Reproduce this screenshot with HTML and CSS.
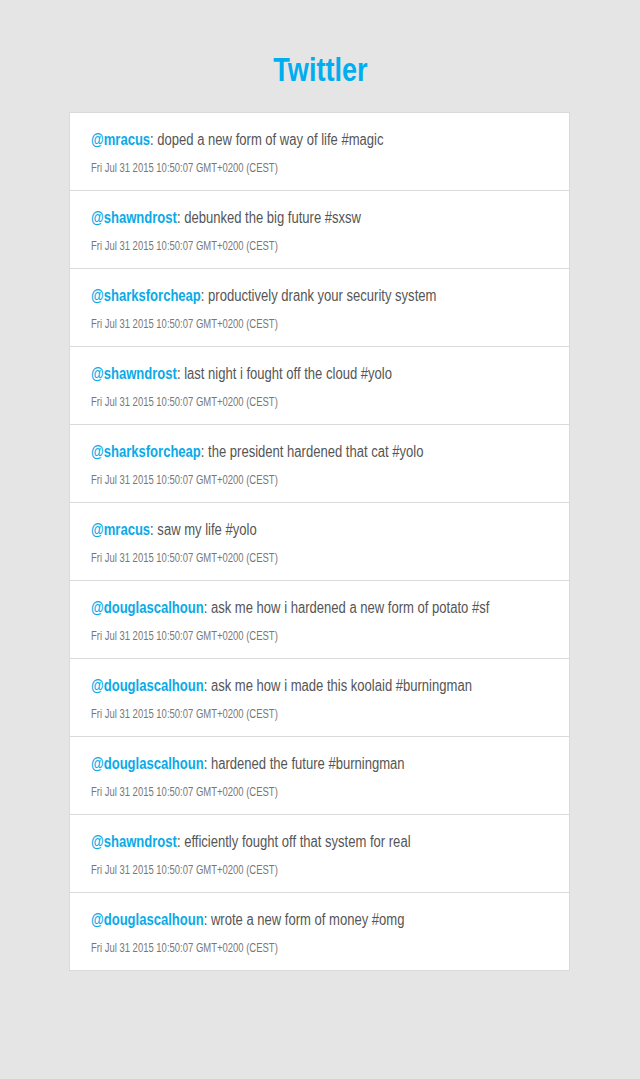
FILE: index.html
```html
<!DOCTYPE html>
<html>
<head>
<meta charset="utf-8">
<link rel="stylesheet" href="styles.css">
</head>
<body>
<h1 class="title"><span class="narrow">Twittler</span></h1>
<ul class="feed">
  <li class="tweet"><p class="msg"><span class="user">@mracus</span>: doped a new form of way of life #magic</p><p class="date">Fri Jul 31 2015 10:50:07 GMT+0200 (CEST)</p></li>
  <li class="tweet"><p class="msg"><span class="user">@shawndrost</span>: debunked the big future #sxsw</p><p class="date">Fri Jul 31 2015 10:50:07 GMT+0200 (CEST)</p></li>
  <li class="tweet"><p class="msg"><span class="user">@sharksforcheap</span>: productively drank your security system</p><p class="date">Fri Jul 31 2015 10:50:07 GMT+0200 (CEST)</p></li>
  <li class="tweet"><p class="msg"><span class="user">@shawndrost</span>: last night i fought off the cloud #yolo</p><p class="date">Fri Jul 31 2015 10:50:07 GMT+0200 (CEST)</p></li>
  <li class="tweet"><p class="msg"><span class="user">@sharksforcheap</span>: the president hardened that cat #yolo</p><p class="date">Fri Jul 31 2015 10:50:07 GMT+0200 (CEST)</p></li>
  <li class="tweet"><p class="msg"><span class="user">@mracus</span>: saw my life #yolo</p><p class="date">Fri Jul 31 2015 10:50:07 GMT+0200 (CEST)</p></li>
  <li class="tweet"><p class="msg"><span class="user">@douglascalhoun</span>: ask me how i hardened a new form of potato #sf</p><p class="date">Fri Jul 31 2015 10:50:07 GMT+0200 (CEST)</p></li>
  <li class="tweet"><p class="msg"><span class="user">@douglascalhoun</span>: ask me how i made this koolaid #burningman</p><p class="date">Fri Jul 31 2015 10:50:07 GMT+0200 (CEST)</p></li>
  <li class="tweet"><p class="msg"><span class="user">@douglascalhoun</span>: hardened the future #burningman</p><p class="date">Fri Jul 31 2015 10:50:07 GMT+0200 (CEST)</p></li>
  <li class="tweet"><p class="msg"><span class="user">@shawndrost</span>: efficiently fought off that system for real</p><p class="date">Fri Jul 31 2015 10:50:07 GMT+0200 (CEST)</p></li>
  <li class="tweet"><p class="msg"><span class="user">@douglascalhoun</span>: wrote a new form of money #omg</p><p class="date">Fri Jul 31 2015 10:50:07 GMT+0200 (CEST)</p></li>
</ul>
</body>
</html>
```
FILE: styles.css
```css
html, body {
  margin: 0;
  padding: 0;
  background: #e5e5e5;
  font-family: "Liberation Sans", Arial, sans-serif;
}
.title {
  margin: 0;
  padding-top: 52px;
  height: 60px;
  text-align: center;
  color: #00aeef;
  font-size: 33px;
  line-height: 36px;
  font-weight: bold;
}
.narrow {
  display: inline-block;
  transform: scaleX(0.82);
  transform-origin: 50% 0;
}
.feed {
  list-style: none;
  margin: 0 0 0 69px;
  padding: 0;
  width: 499px;
  background: #fff;
  border: 1px solid #dadada;
}
.tweet {
  height: 77px;
  padding: 0 20px 0 21px;
  border-top: 1px solid #dadada;
  overflow: hidden;
}
.tweet:first-child {
  border-top: none;
}
.msg {
  margin: 0;
  padding-top: 17px;
  font-size: 16px;
  line-height: 20px;
  color: #555;
  white-space: nowrap;
  transform: scaleX(0.815);
  transform-origin: 0 0;
}
.user {
  color: #0aaae8;
  font-weight: bold;
}
.date {
  margin: 10px 0 0;
  font-size: 12px;
  line-height: 16px;
  color: #777;
  white-space: nowrap;
  transform: scaleX(0.79);
  transform-origin: 0 0;
}
```
